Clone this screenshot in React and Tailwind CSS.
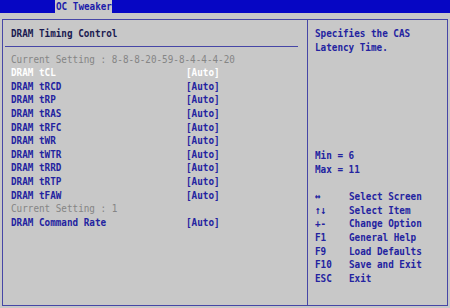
import React from "react";

const rows = [
  "DRAM tCL",
  "DRAM tRCD",
  "DRAM tRP",
  "DRAM tRAS",
  "DRAM tRFC",
  "DRAM tWR",
  "DRAM tWTR",
  "DRAM tRRD",
  "DRAM tRTP",
  "DRAM tFAW",
];

const keys = [
  ["↔", "Select Screen"],
  ["↑↓", "Select Item"],
  ["+-", "Change Option"],
  ["F1", "General Help"],
  ["F9", "Load Defaults"],
  ["F10", "Save and Exit"],
  ["ESC", "Exit"],
];

// BIOS glyphs are taller than DejaVu's, so each text line gets stretched a bit
const line = "h-[13.6px] whitespace-pre scale-y-[1.18]";

const Row = ({ label, value, selected }) => (
  <div className={`flex font-bold ${line} ${selected ? "text-white" : "text-[#2323a0]"}`}>
    <span className="w-[175px]">{label}</span>
    <span>{value}</span>
  </div>
);

const App = () => {
  return (
    <div
      className="w-[450px] h-[308px] bg-[#c8c8c8] overflow-hidden text-[9.3px] leading-[13.6px]"
      style={{ fontFamily: '"DejaVu Sans Mono", "Liberation Mono", monospace' }}
    >
      {/* top menu bar */}
      <div className="h-[13px] bg-[#0606c4] pl-[55px] flex">
        <div className="w-[57px] h-[13px] bg-[#c8c8c8] text-[#1c1caa] font-bold leading-[13px] pl-px whitespace-pre scale-y-[1.1]">
          OC Tweaker
        </div>
      </div>

      <div className="mt-[6px] ml-[2px] w-[446px] h-[287px] border border-[#4646a6] flex">
        {/* left panel */}
        <div className="w-[305px] h-full border-r border-[#4646a6] pt-[6px]">
          <div className={`pl-[8px] text-[#1a1a50] font-semibold ${line}`}>DRAM Timing Control</div>
          <div className="ml-[2px] mt-[6px] w-[293px] h-px bg-[#4646a6]" />
          <div className="pl-[8px] mt-[5px]">
            <div className={`text-[#858585] ${line}`}>Current Setting : 8-8-8-20-59-8-4-4-4-20</div>
            {rows.map((r, i) => (
              <Row key={r} label={r} value="[Auto]" selected={i === 0} />
            ))}
            <div className={`text-[#858585] ${line}`}>Current Setting : 1</div>
            <Row label="DRAM Command Rate" value="[Auto]" />
          </div>
        </div>

        {/* right help panel */}
        <div className="flex-1 pl-[7px] pt-[6px] font-bold text-[#2323a0]">
          <div className={line}>Specifies the CAS</div>
          <div className={line}>Latency Time.</div>
          <div className="h-[95.2px]" />
          <div className={line}>Min = 6</div>
          <div className={line}>Max = 11</div>
          <div className="h-[13.6px]" />
          {keys.map(([k, d]) => (
            <div key={k} className={`flex ${line}`}>
              <span className="w-[34px]">{k}</span>
              <span>{d}</span>
            </div>
          ))}
        </div>
      </div>
    </div>
  );
};

export default App;
